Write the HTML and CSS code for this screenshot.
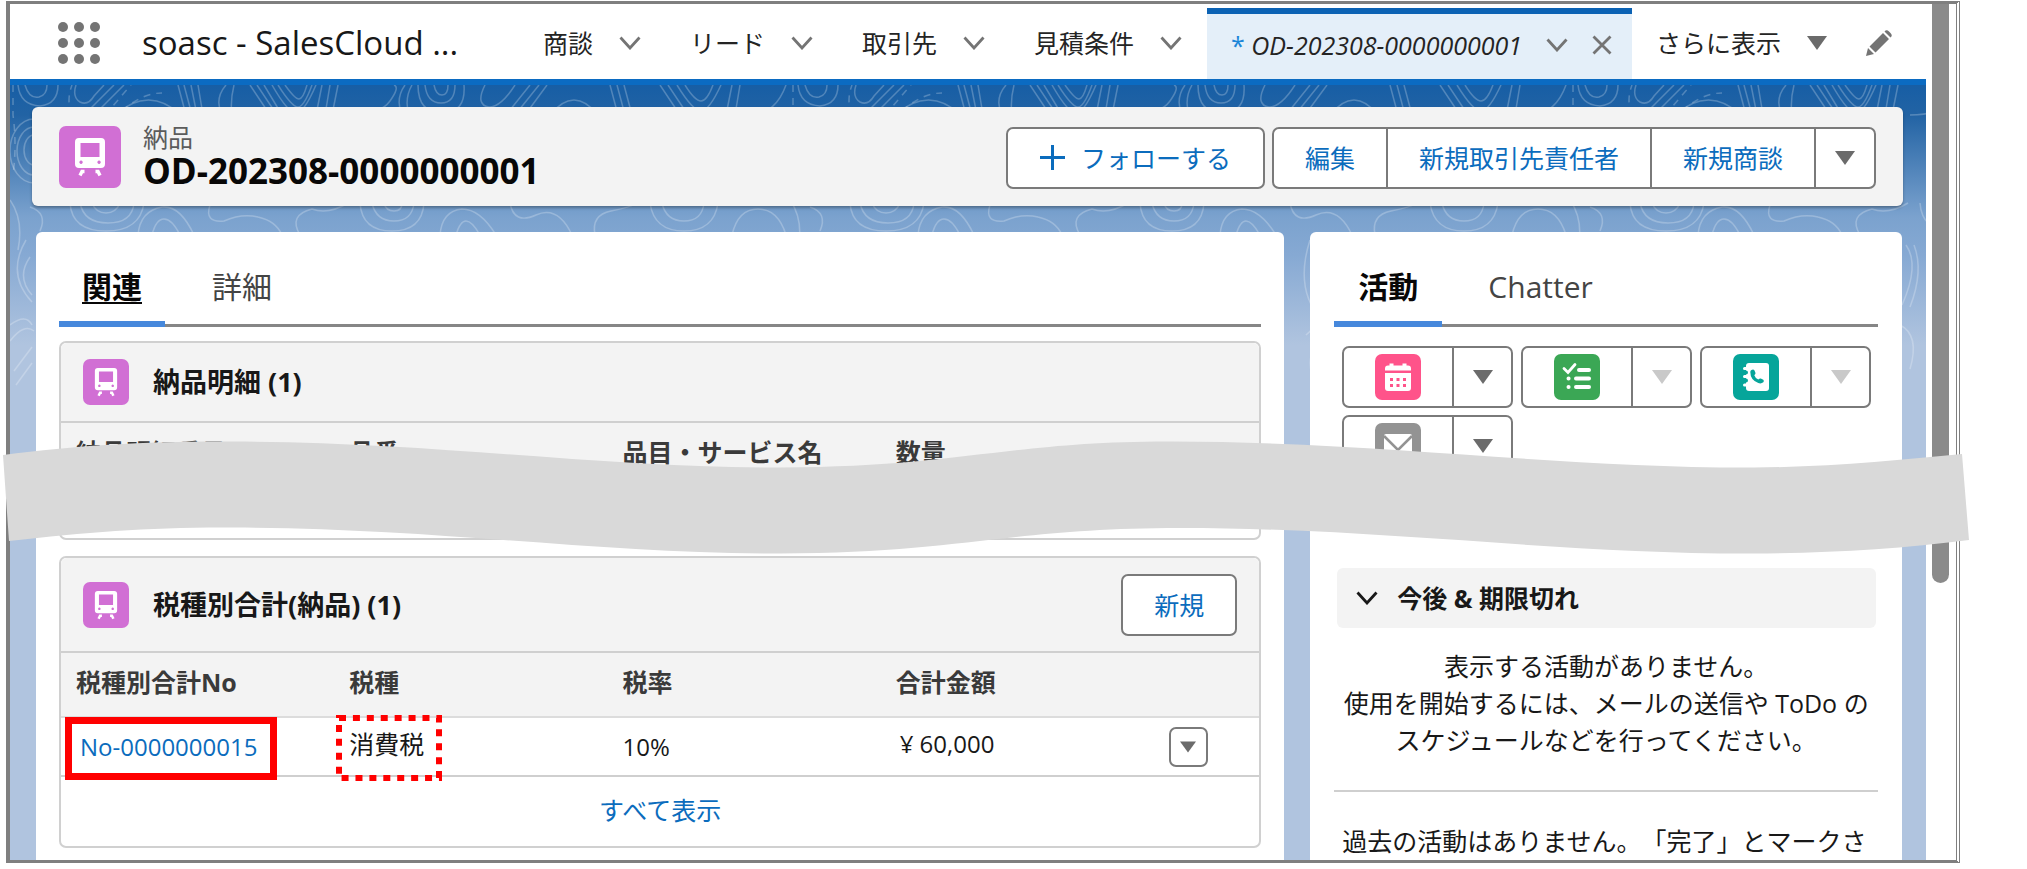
FILE: index.html
```html
<!DOCTYPE html>
<html lang="ja">
<head>
<meta charset="utf-8">
<title>OD-202308-0000000001 | 納品</title>
<link rel="stylesheet" href="styles.css">
</head>
<body>
<svg class="defs" width="0" height="0" aria-hidden="true">
  <defs>
    <symbol id="i-train" viewBox="0 0 62 62">
      <path fill="#fff" fill-rule="evenodd" d="M20 12h22q4 0 4 4v22q0 4-4 4H20q-4 0-4-4V16q0-4 4-4zM21.500 17v14h19V17zM22 34.500a1.700 1.700 0 1 0 .1 0zM40 34.500a1.700 1.700 0 1 0 .1 0z"/>
      <path d="M25.500 45.500h-2.500l-2 4M36.500 45.500h2.500l2 4" fill="none" stroke="#fff" stroke-width="3.400"/>
    </symbol>
    <symbol id="i-chevron" viewBox="0 0 22 14"><path d="M1.500 1.500L11 12L20.500 1.500" fill="none" stroke="currentColor" stroke-width="2.800"/></symbol>
    <symbol id="i-tri" viewBox="0 0 20 14"><path d="M0 0h20L10 14z" fill="currentColor"/></symbol>
    <pattern id="topo" width="780" height="330" patternUnits="userSpaceOnUse">
      <g fill="none" stroke="#fff" stroke-opacity=".24" stroke-width="1.500">
        <path d="M15 0q4 14 14 12q8-2 8-12M8 0q2 20 22 21q18-2 18-21M66 0q-4 12 4 17q8 4 14-6l10-11M74 30l30-30M84 30l30-30"/>
        <path stroke-dasharray="7 6" d="M3 0v30q4 30 0 60M62 30q-6-14 0-30M95 30l26-30M112 26q20-18 40-18"/>
        <path d="M105 30q34-30 66 0M120 30q18-12 34 0M168 0l8 30M174 0l8 30M181 0l6 30M188 0l5 30M216 0q-12 14-4 30M222 30q-2-14 2-30"/>
        <path d="M240 0l20 30M247 0l20 30M254 0l18 30M262 0q16 28 24 28t20-28M268 0q14 22 20 22t14-22M275 0q10 14 14 14t8-14M312 0l-6 30M320 0l-5 30M328 0l-6 30"/>
        <path d="M340 30q30 0 40-14t4-16M395 0q-10 14-3 30M402 0q-8 14-3 30M415 0q2 18 16 18t14-18M424 0q2 10 8 10t6-10M408 0q0 28 24 28t22-28"/>
        <path d="M475 0q-10 20 4 22q12 0 26-22M496 30l24-30M505 30l24-30M515 30l22-30M540 30q24-30 48 0M555 30q10-12 20 0M600 0l8 30M607 0l8 30M614 0l8 30"/>
        <path d="M650 0l20 30M658 0l20 30M667 0q16 26 24 26t20-26M675 0q10 16 16 16t12-16M722 0l-6 30M730 0l-5 30M742 30q24-2 34-30"/>
        <path d="M24 34a24 32 0 0 0 0 64M24 42a17 24 0 0 0 0 48M24 50a10 15 0 0 0 0 30M0 115q14 20 8 50"/>
        <path d="M20 122q18 6 10 24M60 118q2 28 36 28t38-28M70 118q4 20 28 20t26-20M82 118q4 10 14 10t14-10M128 150q2-24 24-28q18-2 32 28M142 150q4-16 12-16t16 16"/>
        <path d="M200 120q-6 18 14 16q18-8 34-4q18 4 24 18M290 150q-12-20 12-26q16 6 36-6M350 118q2 28 32 28t32-28M362 118q4 18 22 18t20-18M374 118q2 8 10 8t8-8"/>
        <path d="M430 150q2-24 22-26q18 0 34 26M446 150q4-14 10-14t14 14M500 118q4 22 26 12t36 20M585 150q-4-20 16-24t26-8M640 118q4 28 34 28t34-28M652 118q4 18 22 18t20-18M722 150q6-26 26-26t28 26"/>
        <path d="M16 155q-20 34 6 62M20 172q-14 20 2 38M0 240q16-12 22 0M0 256q14-18 24-10M4 286l18-24M6 300l16-22M520 155q-16 50 12 80M528 160q-12 40 10 60M516 250q20-20 28 0M522 290q-8-30 20-34"/>
        <path d="M336 160q14 20-4 60M344 160q10 26-4 62M330 240q20 10 10 44M745 30q-14 30 14 80M756 40q-6 24 10 50M770 160q-24 30-4 62M776 176q-14 18 0 34M748 250q20-20 28 4M750 290q2-30 26-30"/>
      </g>
    </pattern>
  </defs>
</svg>

<div class="window">
  <div class="app">
    <header class="nav">
      <button class="launcher" aria-label="アプリケーションランチャー">
        <svg viewBox="0 0 42 42"><g fill="#747474"><circle cx="5" cy="5" r="5"/><circle cx="21" cy="5" r="5"/><circle cx="37" cy="5" r="5"/><circle cx="5" cy="21" r="5"/><circle cx="21" cy="21" r="5"/><circle cx="37" cy="21" r="5"/><circle cx="5" cy="37" r="5"/><circle cx="21" cy="37" r="5"/><circle cx="37" cy="37" r="5"/></g></svg>
      </button>
      <span class="app-name">soasc - SalesCloud ...</span>
      <nav class="tabs">
        <a class="tab" href="#">商談 <svg class="chev"><use href="#i-chevron"/></svg></a>
        <a class="tab" href="#">リード <svg class="chev"><use href="#i-chevron"/></svg></a>
        <a class="tab" href="#">取引先 <svg class="chev"><use href="#i-chevron"/></svg></a>
        <a class="tab" href="#">見積条件 <svg class="chev"><use href="#i-chevron"/></svg></a>
        <a class="tab tab-active" href="#"><span><span class="star">*</span> <i>OD-202308-0000000001</i></span>
          <svg class="chev"><use href="#i-chevron"/></svg>
          <svg class="close" viewBox="0 0 20 20"><path d="M1.500 1.500l17 17M18.500 1.500l-17 17" stroke="currentColor" stroke-width="2.800"/></svg></a>
        <a class="tab" href="#">さらに表示 <svg class="tri"><use href="#i-tri"/></svg></a>
      </nav>
      <button class="edit-nav" aria-label="編集">
        <svg viewBox="0 0 26 26"><path fill="#747474" d="M0 26l2-8 6 6zM3.500 16.500L17 3l6 6L9.500 22.500zM18.500 1.500q2-2.500 4.500 0l1.500 1.500q2.500 2.500 0 4.500z"/></svg>
      </button>
    </header>

    <main class="stage">
      <svg class="topo" width="100%" height="330" aria-hidden="true"><rect width="100%" height="330" fill="url(#topo)"/></svg>

      <section class="record">
        <span class="badge badge-lg"><svg><use href="#i-train"/></svg></span>
        <div class="record-title">
          <p>納品</p>
          <h1>OD-202308-0000000001</h1>
        </div>
        <div class="actions">
          <button class="btn follow"><svg viewBox="0 0 25 25"><path d="M12.500 0v25M0 12.500h25" stroke="currentColor" stroke-width="3"/></svg>フォローする</button>
          <div class="group">
            <button class="btn">編集</button><button class="btn">新規取引先責任者</button><button class="btn">新規商談</button><button class="btn drop" aria-label="その他"><svg class="tri"><use href="#i-tri"/></svg></button>
          </div>
        </div>
      </section>

      <div class="columns">
        <section class="card">
          <div class="subtabs"><a class="on linked" href="#">関連</a><a href="#">詳細</a></div>

          <article class="related hidden-rows">
            <header><span class="badge"><svg><use href="#i-train"/></svg></span><h2>納品明細 (1)</h2></header>
            <table>
              <thead><tr><th>納品明細番号</th><th>品番</th><th>品目・サービス名</th><th>数量</th><th></th></tr></thead>
            </table>
          </article>

          <article class="related">
            <header class="tall"><span class="badge"><svg><use href="#i-train"/></svg></span><h2>税種別合計(納品) (1)</h2><button class="btn">新規</button></header>
            <table>
              <thead><tr><th>税種別合計No</th><th>税種</th><th>税率</th><th>合計金額</th><th></th></tr></thead>
              <tbody><tr>
                <td><a href="#">No-0000000015</a><span class="mark"></span></td>
                <td class="raised">消費税<svg class="mark-dots" viewBox="0 0 106 66"><rect x="3" y="3" width="100" height="60" fill="none" stroke="#f00" stroke-width="6" stroke-dasharray="7 6.913"/></svg></td>
                <td>10%</td>
                <td class="raised"><span class="amount">¥ 60,000</span></td>
                <td class="menu-cell"><button class="row-menu" aria-label="行アクション"><svg><use href="#i-tri"/></svg></button></td>
              </tr></tbody>
            </table>
            <footer><a href="#">すべて表示</a></footer>
          </article>
        </section>

        <aside class="card">
          <div class="subtabs"><a class="on" href="#">活動</a><a href="#">Chatter</a></div>
          <div class="composer">
            <div class="group">
              <button class="btn act" aria-label="新規行動"><svg viewBox="0 0 46 46"><rect width="46" height="46" rx="7" fill="#ff538a"/><path fill="#fff" d="M10 16.500v-2q0-3 3-3h1.500v-2h4v2h9v-2h4v2H33q3 0 3 3v2z"/><path fill="#fff" d="M10 19h26v15q0 3-3 3H13q-3 0-3-3z"/><path stroke="#ff538a" stroke-width="3" stroke-dasharray="3 3.500" d="M15 25.500h17M15 31.500h17"/></svg></button><button class="btn drop" aria-label="行動メニュー"><svg class="tri"><use href="#i-tri"/></svg></button>
            </div>
            <div class="group">
              <button class="btn act" aria-label="新規ToDo"><svg viewBox="0 0 46 46"><rect width="46" height="46" rx="7" fill="#3ba755"/><g fill="none" stroke="#fff" stroke-linecap="round"><path stroke-width="2.800" d="M10 14.500l4 4 7-8"/><path stroke-width="4" d="M25 16h10M22 24.500h13M22 33h13M14.500 24.500h.1M14.500 33h.1"/></g></svg></button><button class="btn drop" disabled aria-label="ToDoメニュー"><svg class="tri"><use href="#i-tri"/></svg></button>
            </div>
            <div class="group">
              <button class="btn act" aria-label="活動の記録"><svg viewBox="0 0 46 46"><rect width="46" height="46" rx="7" fill="#06a59a"/><rect x="13" y="9" width="23" height="28" rx="3" fill="#fff"/><path stroke="#06a59a" stroke-width="4" stroke-linecap="round" d="M12 18.500h1M12 26.500h1"/><path stroke="#fff" stroke-width="3" stroke-linecap="round" d="M11.500 14.500h3M11.500 22.500h3M11.500 31h3"/><path fill="#06a59a" d="M18.500 16q2-1 3 .5l1 2.500q.2 1-1.200 2.200q1 3 4 4.300q1.500-1.500 2.500-1l2.500 1.200q1.200 1 0 2.600q-2 1.800-5 .8q-8-3-8-11q0-1.500 1.200-2.100z"/></svg></button><button class="btn drop" disabled aria-label="記録メニュー"><svg class="tri"><use href="#i-tri"/></svg></button>
            </div>
            <div class="group">
              <button class="btn act" aria-label="メール"><svg viewBox="0 0 46 46"><rect width="46" height="46" rx="7" fill="#939393"/><rect x="9" y="11" width="28" height="24" rx="2" fill="#fff"/><path d="M9 13l14 14 14-14" fill="none" stroke="#939393" stroke-width="2.600"/></svg></button><button class="btn drop" aria-label="メールメニュー"><svg class="tri"><use href="#i-tri"/></svg></button>
            </div>
          </div>
          <h3 class="upcoming"><svg class="chev"><use href="#i-chevron"/></svg>今後 &amp; 期限切れ</h3>
          <p class="empty">表示する活動がありません。<br>使用を開始するには、メールの送信や ToDo の<br>スケジュールなどを行ってください。</p>
          <p class="past">過去の活動はありません。「完了」とマークさ</p>
        </aside>
      </div>
    </main>
  </div>
  <div class="rail"><div class="thumb"></div></div>
</div>

<svg class="tear" viewBox="0 0 2027 116" preserveAspectRatio="none" aria-hidden="true">
  <path fill="#d9d9d9" d="M3 15C80 5 150 1 234 1.500C440 2 600 28 780 27.500C960 27 1010 1 1172 1.500C1380 2 1560 28 1754 27.500C1830 27 1900 20 1962 14L1969 100C1900 109 1830 113 1754 113.500C1560 114 1380 88 1180 88C1010 88 960 113 780 113.500C600 114 440 88 234 87.500C150 87 90 92 9 101Z"/>
</svg>
</body>
</html>
```
FILE: styles.css
```css
* { box-sizing: border-box; }

body {
  margin: 0;
  position: relative;
  height: 100vh;
  padding: 1px 67px 6px 6px;
  overflow: hidden;
  background: #fff;
  color: #181818;
  font: 25px/38px "Open Sans", "Noto Sans CJK JP", sans-serif;
  text-spacing-trim: space-all;
}

h1, h2, h3, p { margin: 0; }
a { color: #0b6cbd; text-decoration: none; }
button { font: inherit; color: inherit; background: none; border: 0; padding: 0; }
svg { display: block; flex: none; }
.defs { position: absolute; }

.window {
  display: flex;
  height: 100%;
  overflow: hidden;
  border: 3px solid #7f7f7f;
  border-width: 3px 4px 3px 4px;
  border-right-style: double;
}
.app { flex: 1; min-width: 0; display: flex; flex-direction: column; }
.rail { width: 30px; flex: none; padding: 0 7px 0 6px; background: #fff; }
.thumb { height: 579px; border-radius: 0 0 9px 9px; background: #8a8a8a; }

/* global navigation */
.nav {
  display: flex;
  align-items: center;
  flex: none;
  height: 81px;
  padding: 2px 0 0 48px;
  border-bottom: 6px solid #0b6bc2;
}
.launcher svg { width: 42px; height: 42px; }
.app-name { width: 377px; margin-left: 42px; font-size: 33px; white-space: nowrap; }
.tabs { display: flex; align-self: stretch; }
.tab {
  display: flex;
  align-items: center;
  gap: 26px;
  padding: 0 24px;
  color: #242424;
  white-space: nowrap;
}
.tab:nth-child(-n+4) { padding-right: 25px; }
.tab-active {
  gap: 24px;
  margin-top: 2px;
  padding: 0 20px 4px 24px;
  border-top: 6px solid #0b62b4;
  background: #e4eff9;
}
.star { color: #1b86d8; }
.chev { width: 22px; height: 14px; color: #747474; }
.close { width: 20px; height: 20px; color: #747474; }
.tri { width: 20px; height: 14px; color: #6b6b6b; }
.edit-nav { margin-left: 15px; }
.edit-nav svg { width: 26px; height: 26px; }

/* page background */
.stage {
  position: relative;
  flex: 1;
  min-height: 0;
  padding: 22px 23px 0 22px;
  background: #b0c4df linear-gradient(#175ea5 0, #2263a4 30px, #7ba2ce 132px, #86a9d3 170px, #b0c4df 260px) no-repeat;
}
.topo { position: absolute; inset: 0 auto auto 0; }

/* record header */
.record {
  position: relative;
  display: flex;
  align-items: center;
  height: 99px;
  padding: 0 27px;
  border-radius: 6px;
  background: #f3f3f3;
  box-shadow: 0 2px 3px rgba(0, 0, 0, .3);
}
.badge { width: 46px; height: 46px; flex: none; border-radius: 7px; background: #d16fd4; }
.badge svg { width: 100%; height: 100%; }
.badge-lg { width: 62px; height: 62px; }
.record-title { flex: 1; margin-left: 22px; white-space: nowrap; }
.record-title p { line-height: 28px; color: #5c5c5c; }
.record-title h1 { font-size: 35px; line-height: 40px; color: #080707; }
.actions { display: flex; gap: 7px; padding-top: 2px; }
.btn {
  height: 62px;
  padding: 0 31px;
  border: 2px solid #7a7a7a;
  border-radius: 7px;
  background: #fff;
  color: #0b6cbd;
  white-space: nowrap;
}
.follow { display: flex; align-items: center; gap: 16px; padding: 0 32px; }
.follow svg { width: 25px; height: 25px; }
.group { display: flex; }
.group .btn + .btn { margin-left: -2px; }
.group .btn:not(:first-child) { border-top-left-radius: 0; border-bottom-left-radius: 0; }
.group .btn:not(:last-child) { border-top-right-radius: 0; border-bottom-right-radius: 0; }
.btn.drop { width: 62px; padding: 0 19px; }
.drop:disabled .tri { color: #c9c9c9; }

/* columns */
.columns {
  position: relative;
  display: grid;
  grid-template-columns: minmax(0, 211fr) minmax(0, 100fr);
  gap: 26px;
  padding: 0 1px 0 4px;
  margin-top: 26px;
}
.card { height: 700px; padding: 0 24px; border-radius: 6px; background: #fff; }
section.card { padding: 0 23px; }
.subtabs { display: flex; height: 95px; border-bottom: 3px solid #868686; font-size: 30px; }
.subtabs a { padding: 36px 23px 0; margin-bottom: -3px; color: #444; }
.subtabs a + a { margin-left: 24px; }
.subtabs .on { border-bottom: 6px solid #4688dc; color: #080707; font-weight: 700; }
.linked { text-decoration: underline; text-decoration-thickness: 2px; text-underline-offset: 4px; }

/* related lists */
.related { margin-top: 14px; border: 2px solid #d0d0d0; border-radius: 7px; }
.related + .related { margin-top: 16px; }
.hidden-rows { height: 199px; }
.related header {
  display: flex;
  align-items: center;
  height: 80px;
  padding: 0 22px;
  border-bottom: 2px solid #cfcfcf;
  border-radius: 6px 6px 0 0;
  background: #f3f3f3;
}
.related header.tall { height: 95px; }
.related h2 { flex: 1; margin-left: 24px; font-size: 27px; }
table { width: 100%; table-layout: fixed; border-collapse: collapse; }
th, td { position: relative; width: 22.8%; padding: 0 0 0 15px; text-align: left; white-space: nowrap; }
th:last-child, td:last-child { width: 8.8%; }
th { height: 64px; padding-bottom: 6px; border-bottom: 2px solid #dcdcdc; background: #f3f3f3; color: #3a3a3a; }
td { height: 59px; border-bottom: 2px solid #cfcfcf; font-size: 24px; }
.raised { padding-bottom: 6px; font-size: 25px; }
td a { margin-left: 4px; }
.amount { margin-left: 4px; font-size: 24px; }
.row-menu {
  display: grid;
  place-items: center;
  width: 39px;
  height: 40px;
  border: 2px solid #7a7a7a;
  border-radius: 7px;
  color: #6b6b6b;
}
.row-menu svg { width: 16px; height: 12px; }
.mark { position: absolute; left: 4px; top: -1px; width: 212px; height: 63px; border: 7px solid #f00; }
.mark-dots { position: absolute; left: 2px; top: -3px; width: 106px; height: 66px; }
.related footer { padding: 14px 0 17px; text-align: center; }

/* activity panel */
aside .subtabs a { padding-right: 24px; padding-left: 24px; }
aside .subtabs a + a { margin-left: 22px; }
.composer { display: flex; flex-wrap: wrap; gap: 7px 8px; padding: 19px 0 0 8px; }
.act { width: 112px; padding: 0; }
.composer .drop { width: 61px; }
.act svg { width: 46px; height: 46px; margin: auto; }
.upcoming {
  display: flex;
  align-items: center;
  gap: 19px;
  height: 60px;
  margin: 91px 2px 0 3px;
  padding-left: 19px;
  border-radius: 6px;
  background: #f3f3f3;
  font-size: 25px;
}
.upcoming .chev { color: #181818; }
.empty { margin: 20px 0 31px; line-height: 37px; text-align: center; white-space: nowrap; }
.past { padding: 30px 8px 0; border-top: 2px solid #cfcfcf; white-space: nowrap; }

/* torn strip across the window */
.tear { position: absolute; left: 0; top: 440px; width: 100%; height: 116px; }
```
